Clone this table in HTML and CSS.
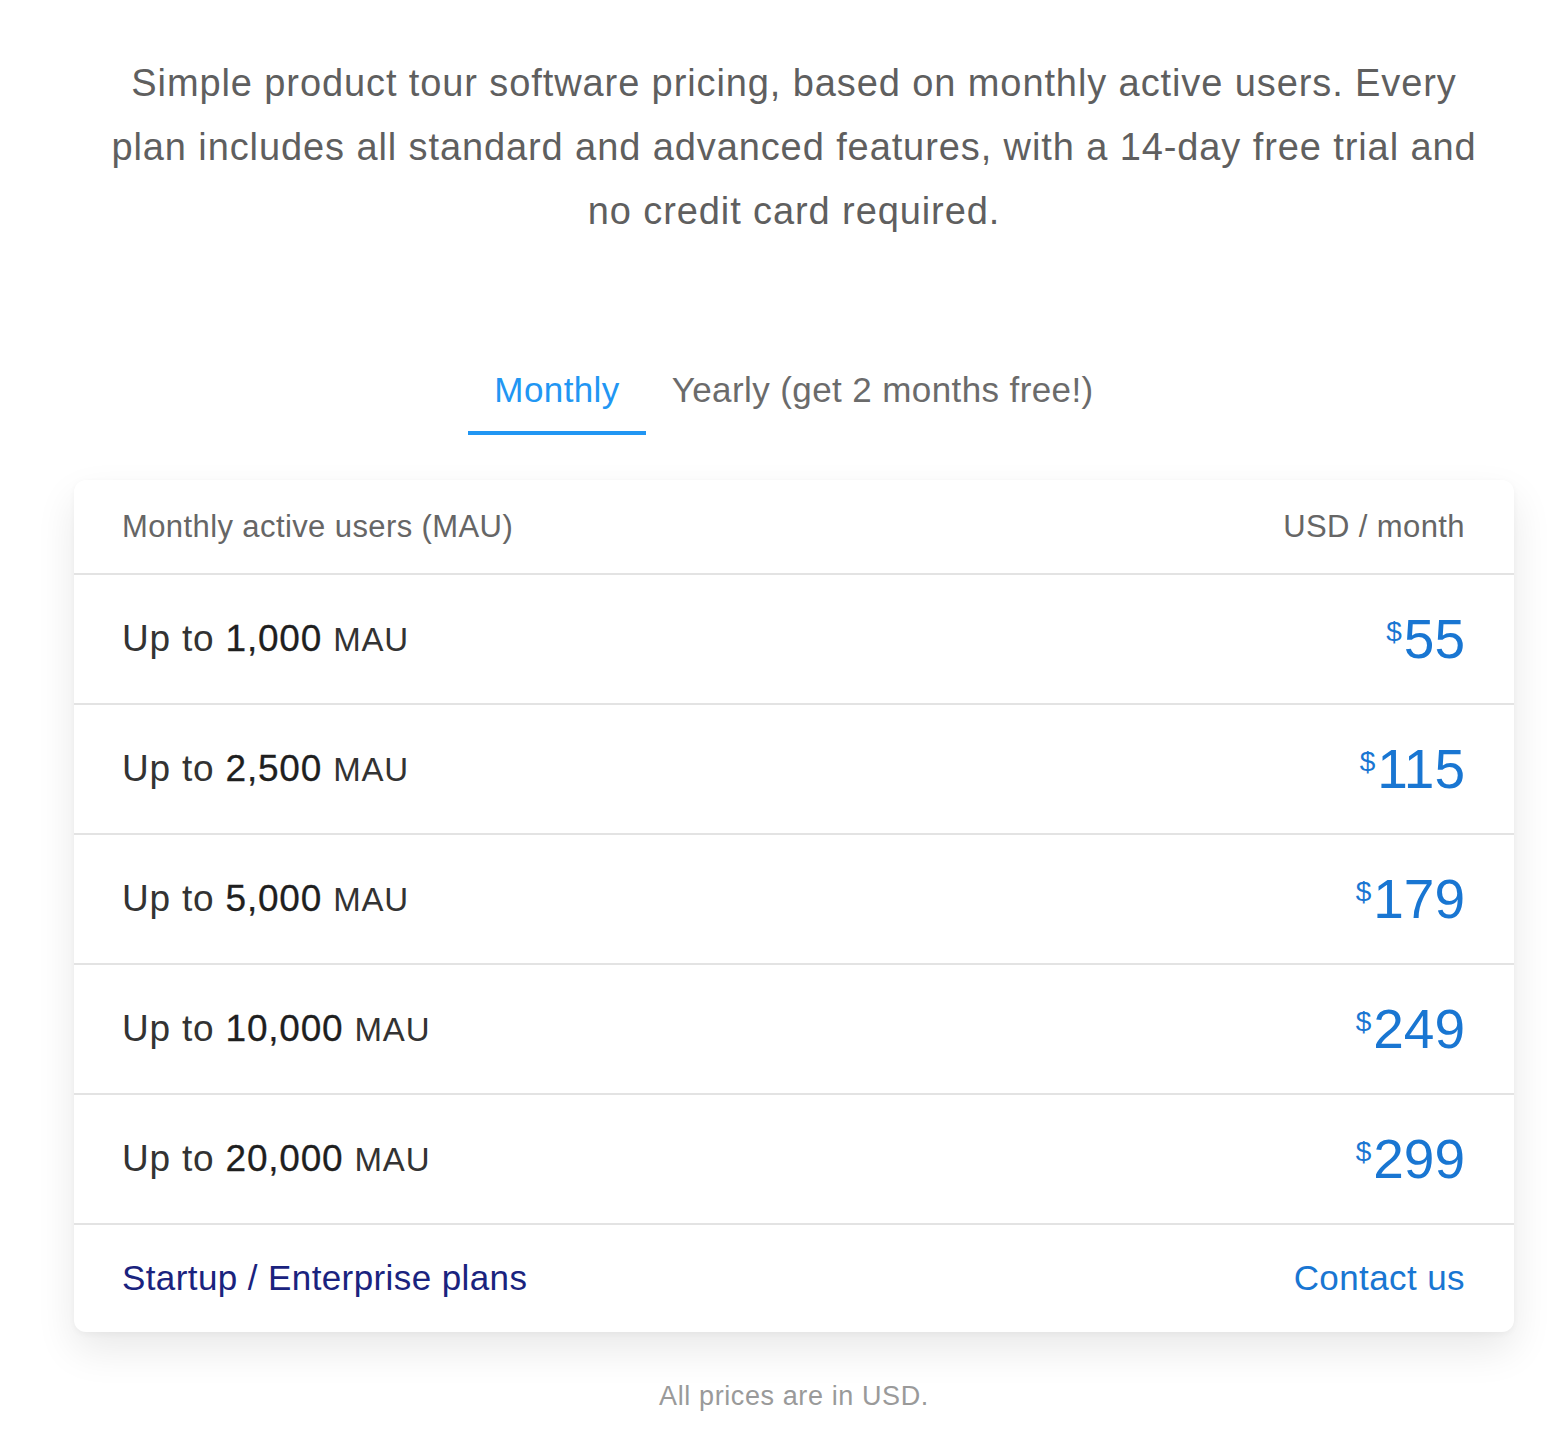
FILE: index.html
```html
<!DOCTYPE html>
<html lang="en">
<head>
<meta charset="utf-8">
<title>Pricing</title>
<link rel="stylesheet" href="styles.css">
</head>
<body>
<main class="page">
  <p class="intro">Simple product tour software pricing, based on monthly active users. Every plan includes all standard and advanced features, with a 14-day free trial and no credit card required.</p>
  <nav class="tabs">
    <a class="tab active">Monthly</a>
    <a class="tab">Yearly (get 2 months free!)</a>
  </nav>
  <section class="card">
    <div class="row head">
      <span>Monthly active users (MAU)</span>
      <span>USD / month</span>
    </div>
    <div class="row plan">
      <span class="users">Up to <b>1,000</b> <small>MAU</small></span>
      <span class="price"><sup>$</sup>55</span>
    </div>
    <div class="row plan">
      <span class="users">Up to <b>2,500</b> <small>MAU</small></span>
      <span class="price"><sup>$</sup>115</span>
    </div>
    <div class="row plan">
      <span class="users">Up to <b>5,000</b> <small>MAU</small></span>
      <span class="price"><sup>$</sup>179</span>
    </div>
    <div class="row plan">
      <span class="users">Up to <b>10,000</b> <small>MAU</small></span>
      <span class="price"><sup>$</sup>249</span>
    </div>
    <div class="row plan">
      <span class="users">Up to <b>20,000</b> <small>MAU</small></span>
      <span class="price"><sup>$</sup>299</span>
    </div>
    <div class="row foot">
      <a class="enterprise">Startup / Enterprise plans</a>
      <a class="contact">Contact us</a>
    </div>
  </section>
  <p class="note">All prices are in USD.</p>
</main>
</body>
</html>
```
FILE: styles.css
```css
* { box-sizing: border-box; }
html, body { margin: 0; background: #fff; }
body {
  font-family: "Liberation Sans", Arial, sans-serif;
  color: #333;
}
.page {
  width: 1440px;
  margin: 0 0 0 74px;
  padding-top: 51px;
  display: flex;
  flex-direction: column;
  align-items: center;
}
.intro {
  margin: 0;
  max-width: 1380px;
  text-align: center;
  font-size: 38px;
  letter-spacing: 0.9px;
  line-height: 64px;
  color: #5f5f5f;
}
.tabs {
  display: flex;
  margin-top: 122px;
}
.tab {
  display: block;
  padding: 0 26px;
  font-size: 35px;
  letter-spacing: 0.4px;
  line-height: 42px;
  height: 70px;
  padding-top: 4px;
  color: #6b6b6b;
  border-bottom: 4px solid transparent;
}
.tab.active {
  color: #2196f3;
  border-bottom-color: #2196f3;
}
.card {
  align-self: stretch;
  margin-top: 45px;
  background: #fff;
  border-radius: 12px;
  box-shadow: 0 18px 40px rgba(0, 0, 0, 0.09), 0 2px 6px rgba(0, 0, 0, 0.04);
  overflow: hidden;
}
.row {
  display: flex;
  justify-content: space-between;
  align-items: center;
  padding: 0 49px 0 48px;
  border-bottom: 2px solid #e3e3e3;
}
.head {
  height: 95px;
  font-size: 31px;
  letter-spacing: 0.4px;
  color: #666;
}
.plan {
  height: 130px;
}
.users {
  font-size: 37px;
  letter-spacing: 0.8px;
  color: #333;
}
.users b {
  font-weight: normal;
  color: #1f1f1f;
  -webkit-text-stroke: 0.3px #1f1f1f;
}
.users small {
  font-size: 33px;
  color: #333;
}
.price {
  font-size: 55px;
  color: #1976d2;
  line-height: 1;
  display: flex;
  align-items: flex-start;
}
.price sup {
  font-size: 28px;
  line-height: 1;
  margin-right: 2px;
  margin-top: 6px;
}
.foot {
  height: 107px;
  border-bottom: none;
  font-size: 35px;
  letter-spacing: 0.4px;
  padding-bottom: 2px;
}
.enterprise { color: #1a237e; }
.contact { color: #1976d2; }
.note {
  margin: 49px 0 0;
  font-size: 27px;
  letter-spacing: 0.6px;
  color: #9a9a9a;
}
```
